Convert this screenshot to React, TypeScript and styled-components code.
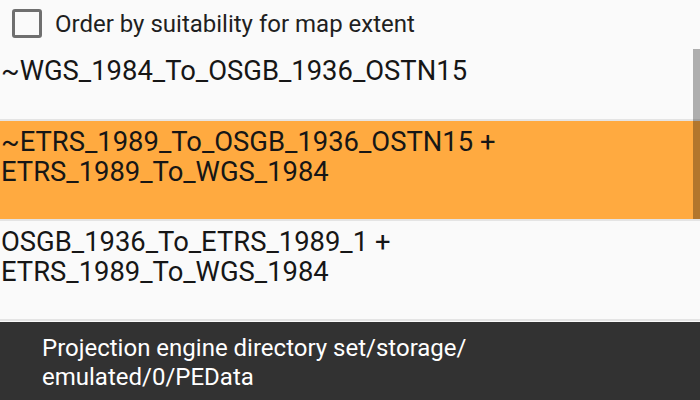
import * as React from 'react';
import styled, { createGlobalStyle } from 'styled-components';

const GlobalStyle = createGlobalStyle`
	html, body {
		margin: 0;
		padding: 0;
		background: #fafafa;
	}
	body {
		font-family: Roboto, "Noto Sans", sans-serif;
		-webkit-font-smoothing: antialiased;
	}
`;

const Screen = styled.div`
	width: 700px;
	height: 400px;
	display: flex;
	flex-direction: column;
	background: #fafafa;
	overflow: hidden;
`;

const Header = styled.label`
	height: 46px;
	flex: none;
	display: flex;
	align-items: center;
	gap: 13px;
	padding: 0 0 0 12px;
	box-sizing: border-box;
	cursor: pointer;
`;

const CheckBox = styled.span`
	width: 30px;
	height: 29px;
	box-sizing: border-box;
	border: 3px solid #6f6f6f;
	border-radius: 3px;
`;

const HeaderText = styled.span`
	font-size: 24px;
	color: #1f1f1f;
	margin-top: 1px;
`;

const List = styled.div`
	position: relative;
	flex: 1;
	display: flex;
	flex-direction: column;
	overflow: hidden;
`;

const Row = styled.div<{ $selected?: boolean; $first?: boolean }>`
	flex: none;
	height: ${(p) => (p.$first ? '75px' : '100px')};
	padding: ${(p) => (p.$first ? '10px' : '6px')} 0 0 1px;
	box-sizing: border-box;
	border-bottom: 2px solid #e4e4e4;
	background: ${(p) => (p.$selected ? '#ffaa40' : '#fafafa')};
	color: #161616;
	font-size: 27.4px;
	line-height: 30px;
	white-space: nowrap;
`;

const ScrollThumb = styled.div`
	position: absolute;
	right: 0;
	top: 3px;
	width: 7px;
	height: 170px;
	background: rgba(0, 0, 0, 0.3);
`;

const Snackbar = styled.div`
	flex: none;
	height: 78px;
	box-sizing: border-box;
	background: #323232;
	color: #ffffff;
	font-size: 24px;
	line-height: 29px;
	padding: 12px 0 0 42px;
`;

const items = [
	['~WGS_1984_To_OSGB_1936_OSTN15'],
	['~ETRS_1989_To_OSGB_1936_OSTN15 +', 'ETRS_1989_To_WGS_1984'],
	['OSGB_1936_To_ETRS_1989_1 +', 'ETRS_1989_To_WGS_1984'],
];

const App = (): React.ReactElement => {
	const [ selected, setSelected ] = React.useState<number>(1);

	return (
		<Screen>
			<GlobalStyle />
			<Header>
				<CheckBox />
				<HeaderText>Order by suitability for map extent</HeaderText>
			</Header>
			<List>
				{items.map((lines, i) => (
					<Row key={i} $first={i === 0} $selected={i === selected} onClick={() => setSelected(i)}>
						{lines.map((l, j) => (
							<div key={j}>{l}</div>
						))}
					</Row>
				))}
				<ScrollThumb />
			</List>
			<Snackbar>
				Projection engine directory set/storage/
				<br />
				emulated/0/PEData
			</Snackbar>
		</Screen>
	);
};

export default App;
